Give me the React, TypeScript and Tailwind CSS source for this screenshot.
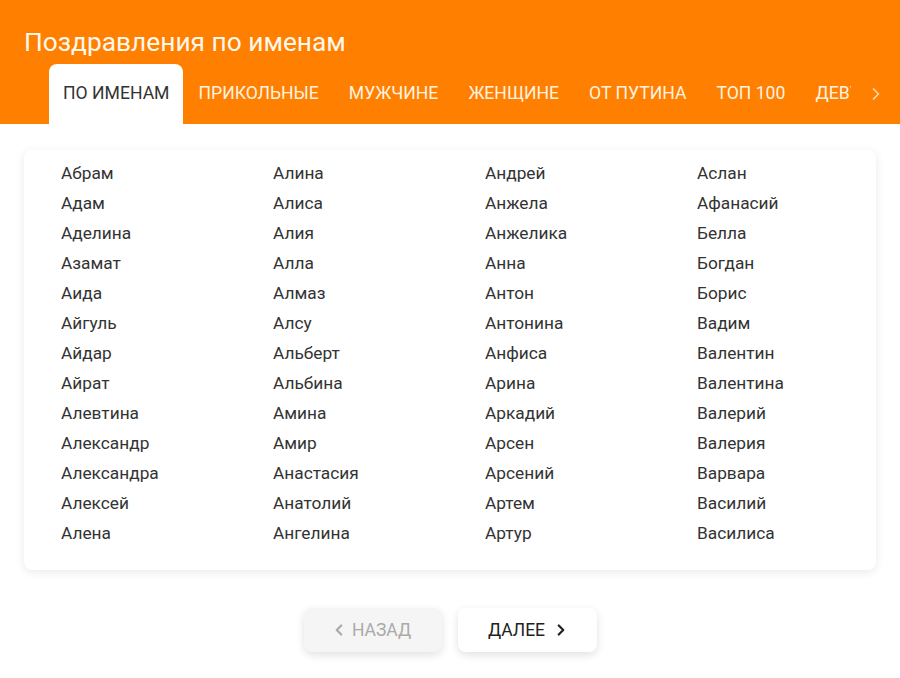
import React from 'react';
import { ChevronLeft, ChevronRight } from 'lucide-react';

const tabs = ['По именам', 'Прикольные', 'Мужчине', 'Женщине', 'От Путина', 'Топ 100', 'Девушке'];

const columns: string[][] = [
  ['Абрам', 'Адам', 'Аделина', 'Азамат', 'Аида', 'Айгуль', 'Айдар', 'Айрат', 'Алевтина', 'Александр', 'Александра', 'Алексей', 'Алена'],
  ['Алина', 'Алиса', 'Алия', 'Алла', 'Алмаз', 'Алсу', 'Альберт', 'Альбина', 'Амина', 'Амир', 'Анастасия', 'Анатолий', 'Ангелина'],
  ['Андрей', 'Анжела', 'Анжелика', 'Анна', 'Антон', 'Антонина', 'Анфиса', 'Арина', 'Аркадий', 'Арсен', 'Арсений', 'Артем', 'Артур'],
  ['Аслан', 'Афанасий', 'Белла', 'Богдан', 'Борис', 'Вадим', 'Валентин', 'Валентина', 'Валерий', 'Валерия', 'Варвара', 'Василий', 'Василиса'],
];

const App = (): React.JSX.Element => {
  return (
    <div className="min-h-[678px] bg-white font-['Roboto',sans-serif]">
      <header className="bg-[#ff7f00]">
        <h1 className="px-6 pt-[26px] text-[26.3px] leading-[32px] text-[#fff8ec]">Поздравления по именам</h1>
        <div className="mt-[6px] flex items-end">
          <nav className="ml-[49px] flex w-[802px] overflow-hidden">
            {tabs.map((tab, i) => (
              <button
                key={tab}
                className={
                  i === 0
                    ? 'shrink-0 rounded-t-lg bg-white px-[14px] pb-[19px] pt-[18px] text-[17.6px] uppercase leading-[23px] text-[#333]'
                    : 'shrink-0 px-[15px] pb-[19px] pt-[18px] text-[17.6px] uppercase leading-[23px] text-[#fff3e0]'
                }
              >
                {tab}
              </button>
            ))}
          </nav>
          <div className="flex flex-1 items-center justify-start pb-[20px] pl-[15px] text-[#ffd9b0]">
            <ChevronRight size={20} strokeWidth={2} />
          </div>
        </div>
      </header>

      <main className="px-6 pt-[26px]">
        <div className="rounded-lg bg-white pb-[22px] pl-[37px] pt-[8px] shadow-[0_2px_10px_rgba(0,0,0,0.09)]">
          <div className="grid grid-cols-[repeat(4,212px)]">
            {columns.map((col, c) => (
              <ul key={c}>
                {col.map((name) => (
                  <li key={name} className="text-[17.3px] leading-[30px] text-[#333]">
                    {name}
                  </li>
                ))}
              </ul>
            ))}
          </div>
        </div>

        <div className="mt-[38px] flex justify-center gap-4">
          <button className="flex h-[44px] w-[138px] items-center justify-center gap-1 rounded-lg bg-[#f5f5f5] pr-1 text-[17.5px] uppercase text-[#aaa] shadow-[0_3px_8px_rgba(0,0,0,0.12)]">
            <ChevronLeft size={18} strokeWidth={3} />
            Назад
          </button>
          <button className="flex h-[44px] w-[139px] items-center justify-center gap-[7px] rounded-lg bg-white pl-1 text-[17.5px] uppercase text-[#222] shadow-[0_3px_8px_rgba(0,0,0,0.12)]">
            Далее
            <ChevronRight size={18} strokeWidth={3} />
          </button>
        </div>
      </main>
    </div>
  );
};

export default App;
